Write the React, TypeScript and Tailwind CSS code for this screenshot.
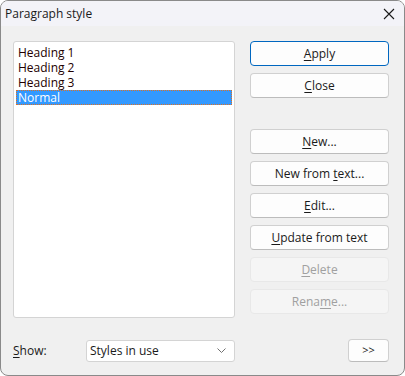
import React from 'react';

const font = { fontFamily: '"Segoe UI", "Open Sans", "Noto Sans", sans-serif' };

function Btn({ label, u, primary, disabled }: { label: string; u: number; primary?: boolean; disabled?: boolean }) {
  const before = label.slice(0, u);
  const ch = label.slice(u, u + 1);
  const after = label.slice(u + 1);
  let cls = 'h-[25px] w-[139px] rounded-[4px] border text-[12px] flex items-center justify-center ';
  if (primary) cls += 'border-[#0067c0] bg-[#fdfdfd] text-[#1a1a1a]';
  else if (disabled) cls += 'border-[#e8e8e8] bg-[#f5f5f5] text-[#a0a0a0]';
  else cls += 'border-[#d0d0d0] border-b-[#bcbcbc] bg-[#fdfdfd] text-[#1a1a1a]';
  return (
    <div className={cls}>
      <span>
        {before}
        <span className="underline underline-offset-2">{ch}</span>
        {after}
      </span>
    </div>
  );
}

export default function App() {
  const items = ['Heading 1', 'Heading 2', 'Heading 3'];
  return (
    <div className="w-[405px] h-[376px] bg-white" style={font}>
      <div className="w-[405px] h-[376px] border border-[#8a8a8a] rounded-[8px] overflow-hidden flex flex-col bg-[#f0f0f0]">
        {/* title bar */}
        <div className="h-[25px] bg-[#f3f3f8] flex items-center justify-between pl-[4px] pr-[8px] shrink-0">
          <span className="text-[12px] text-[#1a1a1a]">Paragraph style</span>
          <svg width="12" height="12" viewBox="0 0 12 12" className="mr-[1px]">
            <path d="M1 1 L11 11 M11 1 L1 11" stroke="#1a1a1a" strokeWidth="1.1" />
          </svg>
        </div>

        <div className="flex pl-[12px] pt-[15px]">
          {/* list */}
          <div className="w-[222px] h-[277px] bg-white border border-[#d4d4d4] rounded-[3px] pt-[3px] px-[2px] text-[12px] leading-[15px]">
            {items.map((t) => (
              <div key={t} className="pl-[2px] text-[#200]">{t}</div>
            ))}
            <div className="pl-[1px] bg-[#3399ff] text-white border border-dotted border-[#e07020] leading-[13px] h-[15px]">
              Normal
            </div>
          </div>

          {/* buttons */}
          <div className="ml-[15px] flex flex-col">
            <Btn label="Apply" u={0} primary />
            <div className="mt-[7px]"><Btn label="Close" u={0} /></div>
            <div className="mt-[31px] flex flex-col gap-[7px]">
              <Btn label="New..." u={0} />
              <Btn label="New from text..." u={9} />
              <Btn label="Edit..." u={0} />
              <Btn label="Update from text" u={0} />
              <Btn label="Delete" u={0} disabled />
              <Btn label="Rename..." u={4} disabled />
            </div>
          </div>
        </div>

        {/* bottom row */}
        <div className="flex items-center pl-[12px] mt-[21px]">
          <span className="text-[12px] text-[#1a1a1a] w-[73px]">
            <span className="underline underline-offset-2">S</span>how:
          </span>
          <div className="w-[149px] h-[22px] bg-white border border-[#d4d4d4] rounded-[3px] flex items-center justify-between pl-[3px] pr-[8px] text-[12px] text-[#1a1a1a]">
            <span>Styles in use</span>
            <svg width="9" height="5" viewBox="0 0 9 5">
              <path d="M0.5 0.5 L4.5 4.5 L8.5 0.5" stroke="#707070" strokeWidth="1" fill="none" />
            </svg>
          </div>
          <div className="ml-auto mr-[15px] w-[41px] h-[23px] rounded-[4px] border border-[#d0d0d0] border-b-[#bcbcbc] bg-[#fdfdfd] flex items-center justify-center text-[11px] text-[#1a1a1a]">
            &gt;&gt;
          </div>
        </div>
      </div>
    </div>
  );
}
